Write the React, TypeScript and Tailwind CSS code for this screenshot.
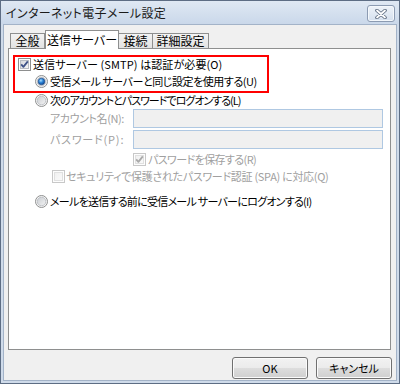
import React, { useId } from "react";

function CheckBox({ checked, disabled }: { checked: boolean; disabled?: boolean }) {
  const id = useId().replace(/:/g, "");
  const outer = disabled ? "#c8c8c8" : "#8e8f8f";
  const innerStroke = disabled ? "#e0e0e0" : "#b9bdc3";
  const g1 = disabled ? "#f0f0f0" : "#d5d8dd";
  const g2 = disabled ? "#fafafa" : "#f7f7f7";
  const mark = disabled ? "#a9a9a9" : "#3f5388";
  return (
    <svg width="13" height="13" viewBox="0 0 13 13" className="shrink-0 block">
      <defs>
        <linearGradient id={`cg${id}`} x1="0" y1="0" x2="1" y2="1">
          <stop offset="0" stopColor={g1} />
          <stop offset="1" stopColor={g2} />
        </linearGradient>
      </defs>
      <rect x="0.5" y="0.5" width="12" height="12" fill="#fdfdfd" stroke={outer} />
      <rect x="2.5" y="2.5" width="8" height="8" fill={`url(#cg${id})`} stroke={innerStroke} />
      {checked && (
        <path d="M3.2 6.4 L5.4 8.9 L9.8 3.4" stroke={mark} strokeWidth="1.8" fill="none" strokeLinejoin="round" />
      )}
    </svg>
  );
}

function Radio({ checked }: { checked: boolean }) {
  const id = useId().replace(/:/g, "");
  return (
    <svg width="13" height="13" viewBox="0 0 13 13" className="shrink-0 block">
      <defs>
        <linearGradient id={`ro${id}`} x1="0" y1="0" x2="1" y2="1">
          <stop offset="0" stopColor="#c9ccd1" />
          <stop offset="1" stopColor="#f4f4f4" />
        </linearGradient>
        <radialGradient id={`rd${id}`} cx="0.4" cy="0.35" r="0.7">
          <stop offset="0" stopColor="#a9e0ff" />
          <stop offset="0.45" stopColor="#2f86d8" />
          <stop offset="1" stopColor="#0b3f86" />
        </radialGradient>
      </defs>
      <circle cx="6.5" cy="6.5" r="6" fill="#f6f6f6" stroke="#8e8f8f" />
      <circle cx="6.5" cy="6.5" r="4.3" fill={`url(#ro${id})`} stroke="#b4b8be" strokeWidth="0.8" />
      {checked && <circle cx="6.5" cy="6.5" r="3.3" fill={`url(#rd${id})`} stroke="#1b4a8a" strokeWidth="0.6" />}
    </svg>
  );
}

function WinButton({ children }: { children: React.ReactNode }) {
  return (
    <div className="w-[76px] h-[22px] rounded-[3px] border border-[#707070] bg-[linear-gradient(to_bottom,#f2f2f2_0%,#ebebeb_50%,#dddddd_51%,#cfcfcf_100%)] shadow-[inset_0_0_0_1px_#fbfbfb] flex items-center justify-center text-[11px] leading-none text-black">
      {children}
    </div>
  );
}

export default function App() {
  return (
    <div className="w-[400px] h-[384px] border border-[#5d6d84] bg-[#cfdbea] flex flex-col font-['Noto_Sans_CJK_JP','Noto_Sans',sans-serif] [font-feature-settings:'palt'] whitespace-nowrap select-none">
      {/* title bar */}
      <div className="h-[23px] flex items-start justify-between bg-[linear-gradient(to_bottom,#dfe8f3,#cad8ea)]">
        <div className="pl-[5px] pt-[4px] text-[12px] leading-[15px] tracking-[0.35px] text-[#1a1a1a]">
          インターネット電子メール設定
        </div>
        <div className="mt-[4px] mr-[4px] w-[28px] h-[17px] rounded-[3px] border border-[#8c9bb2] bg-[linear-gradient(to_bottom,#eef3f9,#d5e0ee)] shadow-[inset_0_0_0_1px_#f4f8fc] flex items-center justify-center">
          <svg width="12" height="10" viewBox="0 0 12 10">
            <path d="M2 1.5 L10 8.5 M10 1.5 L2 8.5" stroke="#5e6c80" strokeWidth="3.6" strokeLinecap="round" />
            <path d="M2 1.5 L10 8.5 M10 1.5 L2 8.5" stroke="#ffffff" strokeWidth="1.8" strokeLinecap="round" />
          </svg>
        </div>
      </div>

      {/* body */}
      <div className="flex-1 mx-[2px] mb-[2px] border border-[#a3b3c8] bg-[#f0f0f0] flex flex-col text-[11px] text-black">
        {/* tabs */}
        <div className="pt-[4px] pl-[6px] flex items-end h-[23px] text-[12px]">
          <div className="w-[35px] h-[15px] border border-b-0 border-[#8e8f8f] bg-[linear-gradient(to_bottom,#f3f3f3,#e2e2e2)] flex items-center justify-center leading-none">
            全般
          </div>
          <div className="relative z-10 -mb-px w-[74px] h-[19px] border border-b-0 border-[#8e8f8f] bg-white flex items-center justify-center leading-none pb-[1px]">
            送信サーバー
          </div>
          <div className="w-[34px] h-[15px] border border-b-0 border-l-0 border-[#8e8f8f] bg-[linear-gradient(to_bottom,#f3f3f3,#e2e2e2)] flex items-center justify-center leading-none">
            接続
          </div>
          <div className="w-[56px] h-[15px] border border-b-0 border-l-0 border-[#8e8f8f] bg-[linear-gradient(to_bottom,#f3f3f3,#e2e2e2)] flex items-center justify-center leading-none">
            詳細設定
          </div>
        </div>

        {/* panel */}
        <div className="ml-[4px] w-[383px] h-[302px] border border-[#8e8f8f] bg-white flex flex-col">
          {/* red box */}
          <div className="ml-[4px] mt-[6px] w-[256px] h-[38px] border-2 border-[#ff0000] flex flex-col">
            <div className="pl-[3px] pt-[1px] h-[14px] flex items-center gap-[2px] leading-none">
              <CheckBox checked />
              <span className="tracking-[0.1px]">送信サーバー (SMTP) は認証が必要(O)</span>
            </div>
            <div className="pl-[20px] mt-[4px] h-[13px] flex items-center gap-[2px] leading-none">
              <Radio checked />
              <span className="tracking-[-0.45px]">受信メール サーバーと同じ設定を使用する(U)</span>
            </div>
          </div>

          <div className="pl-[26px] mt-[1px] h-[13px] flex items-center gap-[2px] leading-none">
            <Radio checked={false} />
            <span className="tracking-[-1px]">次のアカウントとパスワードでログオンする(L)</span>
          </div>

          <div className="pl-[41px] mt-[2px] flex items-center leading-none text-[#a0a0a0]">
            <span className="w-[83px] tracking-[-0.4px]">アカウント名(N):</span>
            <div className="w-[250px] h-[19px] border border-[#afc8e2] bg-[#f0f0f0]" />
          </div>
          <div className="pl-[41px] mt-[2px] flex items-center leading-none text-[#a0a0a0]">
            <span className="w-[83px] tracking-[0.8px]">パスワード(P):</span>
            <div className="w-[250px] h-[19px] border border-[#afc8e2] bg-[#f0f0f0]" />
          </div>

          <div className="pl-[124px] mt-[4px] h-[13px] flex items-center gap-[2px] leading-none text-[#a0a0a0]">
            <CheckBox checked disabled />
            <span className="tracking-[-0.6px]">パスワードを保存する(R)</span>
          </div>
          <div className="pl-[43px] mt-[4px] h-[13px] flex items-center gap-[1px] leading-none text-[#a0a0a0]">
            <CheckBox checked={false} disabled />
            <span className="tracking-[-0.3px]">セキュリティで保護されたパスワード認証 (SPA) に対応(Q)</span>
          </div>

          <div className="pl-[26px] mt-[12px] h-[13px] flex items-center gap-[2px] leading-none">
            <Radio checked={false} />
            <span className="tracking-[-0.73px]">メールを送信する前に受信メール サーバーにログオンする(I)</span>
          </div>
        </div>

        {/* buttons */}
        <div className="mt-[7px] pr-[4px] flex justify-end gap-[8px]">
          <WinButton>OK</WinButton>
          <WinButton>キャンセル</WinButton>
        </div>
      </div>
    </div>
  );
}
